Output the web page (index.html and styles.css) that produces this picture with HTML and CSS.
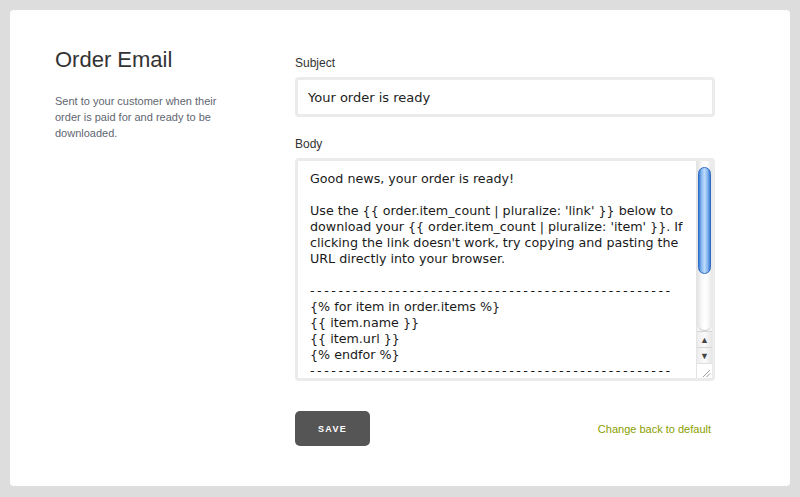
FILE: index.html
```html
<!DOCTYPE html>
<html lang="en">
<head>
    <meta charset="UTF-8">
    <meta name="viewport" content="width=device-width, initial-scale=1.0">
    <title>Order Email</title>
    <link rel="stylesheet" href="styles.css">
</head>
<body>
    <div class="card">
        <div class="intro">
            <h1>Order Email</h1>
            <p>Sent to your customer when their order is paid for and ready to be downloaded.</p>
        </div>

        <form class="email-form">
            <label for="subject">Subject</label>
            <input type="text" id="subject" name="subject" value="Your order is ready">

            <label for="body">Body</label>
            <div class="body-field">
                <textarea id="body" name="body" wrap="off">Good news, your order is ready!

Use the {{ order.item_count | pluralize: 'link' }} below to
download your {{ order.item_count | pluralize: 'item' }}. If
clicking the link doesn't work, try copying and pasting the
URL directly into your browser.

-&#8201;-&#8201;-&#8201;-&#8201;-&#8201;-&#8201;-&#8201;-&#8201;-&#8201;-&#8201;-&#8201;-&#8201;-&#8201;-&#8201;-&#8201;-&#8201;-&#8201;-&#8201;-&#8201;-&#8201;-&#8201;-&#8201;-&#8201;-&#8201;-&#8201;-&#8201;-&#8201;-&#8201;-&#8201;-&#8201;-&#8201;-&#8201;-&#8201;-&#8201;-&#8201;-&#8201;-&#8201;-&#8201;-&#8201;-&#8201;-&#8201;-&#8201;-&#8201;-&#8201;-&#8201;-&#8201;-&#8201;-&#8201;-&#8201;-&#8201;-
{% for item in order.items %}
{{ item.name }}
{{ item.url }}
{% endfor %}
-&#8201;-&#8201;-&#8201;-&#8201;-&#8201;-&#8201;-&#8201;-&#8201;-&#8201;-&#8201;-&#8201;-&#8201;-&#8201;-&#8201;-&#8201;-&#8201;-&#8201;-&#8201;-&#8201;-&#8201;-&#8201;-&#8201;-&#8201;-&#8201;-&#8201;-&#8201;-&#8201;-&#8201;-&#8201;-&#8201;-&#8201;-&#8201;-&#8201;-&#8201;-&#8201;-&#8201;-&#8201;-&#8201;-&#8201;-&#8201;-&#8201;-&#8201;-&#8201;-&#8201;-&#8201;-&#8201;-&#8201;-&#8201;-&#8201;-&#8201;-
</textarea>
                <div class="scrollbar">
                    <div class="track">
                        <div class="thumb"></div>
                    </div>
                    <div class="arrow">&#9650;</div>
                    <div class="arrow">&#9660;</div>
                    <div class="grip">
                        <svg width="15" height="15" viewBox="0 0 15 15">
                            <path d="M6 13 L13 6 M9.5 13 L13 9.5" stroke="#999" stroke-width="1" fill="none"/>
                        </svg>
                    </div>
                </div>
            </div>

            <div class="actions">
                <button type="submit">SAVE</button>
                <a href="#">Change back to default</a>
            </div>
        </form>
    </div>
</body>
</html>
```

FILE: styles.css
```css
body {
    margin: 0;
    padding: 10px;
    background-color: #dddddd;
    font-family: "Liberation Sans", Arial, sans-serif;
}

.card {
    background: #ffffff;
    border-radius: 4px;
    height: 476px;
    box-sizing: border-box;
    padding: 37px 75px 0 45px;
    display: flex;
}

.intro {
    width: 240px;
    flex-shrink: 0;
}

h1 {
    margin: 0 0 20px;
    font-size: 22px;
    line-height: 26px;
    font-weight: normal;
    color: #333;
}

.intro p {
    margin: 0;
    width: 180px;
    font-size: 11px;
    line-height: 16px;
    color: #5f6670;
}

.email-form {
    flex: 1;
    display: flex;
    flex-direction: column;
    padding-top: 9px;
}

label {
    font-size: 12px;
    line-height: 15px;
    color: #333;
    margin-bottom: 6px;
}

input[type="text"] {
    height: 40px;
    box-sizing: border-box;
    border: 3px solid #ebebeb;
    border-radius: 4px;
    padding: 0 10px;
    margin: 0 0 20px;
    font-family: "DejaVu Sans", sans-serif;
    font-size: 13px;
    color: #222;
    outline: none;
}

.body-field {
    display: flex;
    height: 223px;
    box-sizing: border-box;
    border: 3px solid #ebebeb;
    border-radius: 4px;
}

textarea {
    flex: 1;
    border: none;
    resize: none;
    overflow: hidden;
    white-space: pre;
    padding: 10px 12px 9px;
    margin: 0;
    font-family: "DejaVu Sans", sans-serif;
    font-size: 12.7px;
    line-height: 16px;
    color: #1a1a1a;
    outline: none;
}

.scrollbar {
    width: 15px;
    display: flex;
    flex-direction: column;
    background: #f4f4f4;
    border-left: 1px solid #e4e4e4;
}

.track {
    flex: 1;
    padding: 6px 1px 0;
    border-radius: 0 0 8px 8px;
    background: linear-gradient(to right, #e2e2e2, #fafafa 35%, #ffffff 60%, #e8e8e8);
    border-bottom: 1px solid #cfcfcf;
}

.thumb {
    height: 107px;
    box-sizing: border-box;
    border: 1px solid #2f6cc4;
    border-radius: 7px;
    background: linear-gradient(to right, #3b7ad4, #8ebdf3 25%, #bcdafb 50%, #8cbaf0 75%, #3d7cd6);
}

.arrow {
    height: 16px;
    font-size: 9px;
    line-height: 16px;
    text-align: center;
    color: #444;
    background: linear-gradient(to right, #ececec, #fafafa 50%, #e6e6e6);
    border-top: 1px solid #d6d6d6;
    box-sizing: border-box;
}

.grip {
    height: 15px;
    background: #ffffff;
    border-top: 1px solid #e0e0e0;
    box-sizing: border-box;
}

.grip svg {
    display: block;
}

.actions {
    display: flex;
    justify-content: space-between;
    align-items: center;
    margin-top: 30px;
    padding-right: 4px;
}

button {
    width: 75px;
    height: 35px;
    background-color: #555555;
    color: #ffffff;
    border: none;
    border-radius: 5px;
    font-family: "Liberation Sans", Arial, sans-serif;
    font-size: 9px;
    font-weight: bold;
    letter-spacing: 1.3px;
    cursor: pointer;
}

a {
    font-size: 11px;
    color: #8a9e00;
    text-decoration: none;
}
```
